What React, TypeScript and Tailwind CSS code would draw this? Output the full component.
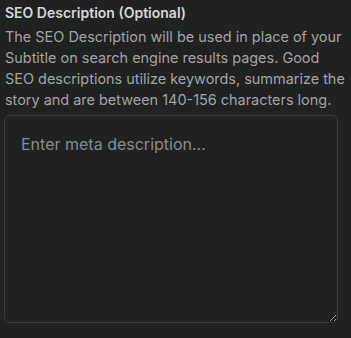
export default function App() {
  return (
    <div
      className="min-h-[338px] w-[351px] bg-[#202121] px-[5px] pt-[3px]"
      style={{ fontFamily: 'Inter, "Noto Sans", sans-serif' }}
    >
      <label className="block text-[14px] font-semibold leading-[20px] text-[#d6d6d6]">
        SEO Description (Optional)
      </label>
      <p className="mt-[3px] text-[14.45px] leading-[21px] text-[#a3a3a3]">
        The SEO Description will be used in place of your Subtitle on search engine results pages. Good SEO descriptions utilize keywords, summarize the story and are between 140-156 characters long.
      </p>
      <textarea
        placeholder="Enter meta description..."
        className="-ml-px mt-[5px] block h-[208px] w-[334px] rounded-[6px] border border-[#3a3b3b] bg-[#202121] px-[16px] py-[16px] text-[16px] leading-[24px] text-[#d6d6d6] placeholder:text-[#8a8a8a] outline-none"
      />
    </div>
  );
}
